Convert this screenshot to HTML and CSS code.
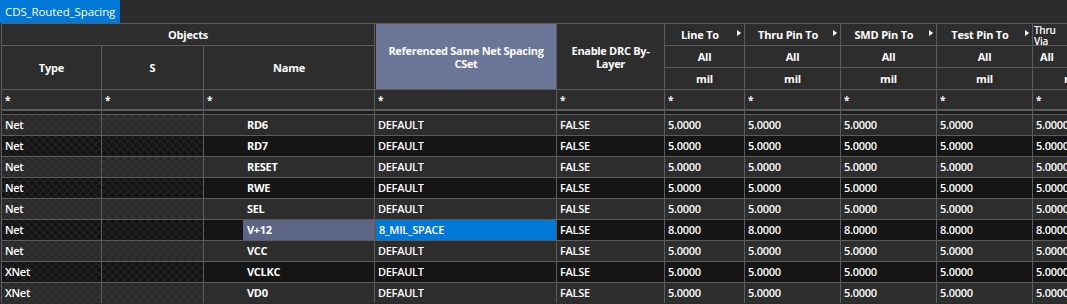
FILE: index.html
```html
<!DOCTYPE html>
<html>
<head>
<meta charset="utf-8">
<link rel="stylesheet" href="styles.css">
</head>
<body>
<div class="tabbar"><div class="tab">CDS_Routed_Spacing</div></div>
<div class="grid">
  <div class="hd c-obj">Objects</div>
  <div class="hd c-ref">Referenced Same Net Spacing CSet</div>
  <div class="hd c-drc">Enable DRC By-Layer</div>
  <div class="hd col"><span>Line To</span><i class="tri"></i></div>
  <div class="hd col"><span>Thru Pin To</span><i class="tri"></i></div>
  <div class="hd col"><span>SMD Pin To</span><i class="tri"></i></div>
  <div class="hd col"><span>Test Pin To</span><i class="tri"></i></div>
  <div class="hd col via"><span class="via-t">Thru<br>Via</span><i class="tri"></i></div>

  <div class="hd c-sub">Type</div>
  <div class="hd c-sub">S</div>
  <div class="hd c-sub">Name</div>
  <div class="hd">All</div>
  <div class="hd">All</div>
  <div class="hd">All</div>
  <div class="hd">All</div>
  <div class="hd via-all">All</div>

  <div class="hd">mil</div>
  <div class="hd">mil</div>
  <div class="hd">mil</div>
  <div class="hd">mil</div>
  <div class="hd via-mil">mil</div>

  <div class="flt">*</div><div class="flt">*</div><div class="flt">*</div><div class="flt">*</div><div class="flt">*</div>
  <div class="flt">*</div><div class="flt">*</div><div class="flt">*</div><div class="flt">*</div><div class="flt">*</div>

  <div class="sep"></div><div class="sep"></div><div class="sep"></div><div class="sep"></div><div class="sep"></div>
  <div class="sep"></div><div class="sep"></div><div class="sep"></div><div class="sep"></div><div class="sep"></div>

  <div class="d l hatch">Net</div><div class="d l hatch"></div><div class="d l name"><span>RD6</span></div><div class="d l">DEFAULT</div><div class="d l">FALSE</div><div class="d l">5.0000</div><div class="d l">5.0000</div><div class="d l">5.0000</div><div class="d l">5.0000</div><div class="d l">5.0000</div>
  <div class="d k hatch">Net</div><div class="d k hatch"></div><div class="d k name"><span>RD7</span></div><div class="d k">DEFAULT</div><div class="d k">FALSE</div><div class="d k">5.0000</div><div class="d k">5.0000</div><div class="d k">5.0000</div><div class="d k">5.0000</div><div class="d k">5.0000</div>
  <div class="d l hatch">Net</div><div class="d l hatch"></div><div class="d l name"><span>RESET</span></div><div class="d l">DEFAULT</div><div class="d l">FALSE</div><div class="d l">5.0000</div><div class="d l">5.0000</div><div class="d l">5.0000</div><div class="d l">5.0000</div><div class="d l">5.0000</div>
  <div class="d k hatch">Net</div><div class="d k hatch"></div><div class="d k name"><span>RWE</span></div><div class="d k">DEFAULT</div><div class="d k">FALSE</div><div class="d k">5.0000</div><div class="d k">5.0000</div><div class="d k">5.0000</div><div class="d k">5.0000</div><div class="d k">5.0000</div>
  <div class="d l hatch">Net</div><div class="d l hatch"></div><div class="d l name"><span>SEL</span></div><div class="d l">DEFAULT</div><div class="d l">FALSE</div><div class="d l">5.0000</div><div class="d l">5.0000</div><div class="d l">5.0000</div><div class="d l">5.0000</div><div class="d l">5.0000</div>
  <div class="d k hatch">Net</div><div class="d k hatch"></div><div class="d k name"><span class="hl">V+12</span></div><div class="d k sel">8_MIL_SPACE</div><div class="d k">FALSE</div><div class="d k">8.0000</div><div class="d k">8.0000</div><div class="d k">8.0000</div><div class="d k">8.0000</div><div class="d k">8.0000</div>
  <div class="d l hatch">Net</div><div class="d l hatch"></div><div class="d l name"><span>VCC</span></div><div class="d l">DEFAULT</div><div class="d l">FALSE</div><div class="d l">5.0000</div><div class="d l">5.0000</div><div class="d l">5.0000</div><div class="d l">5.0000</div><div class="d l">5.0000</div>
  <div class="d k hatch">XNet</div><div class="d k hatch"></div><div class="d k name"><span>VCLKC</span></div><div class="d k">DEFAULT</div><div class="d k">FALSE</div><div class="d k">5.0000</div><div class="d k">5.0000</div><div class="d k">5.0000</div><div class="d k">5.0000</div><div class="d k">5.0000</div>
  <div class="d l hatch">XNet</div><div class="d l hatch"></div><div class="d l name"><span>VD0</span></div><div class="d l">DEFAULT</div><div class="d l">FALSE</div><div class="d l">5.0000</div><div class="d l">5.0000</div><div class="d l">5.0000</div><div class="d l">5.0000</div><div class="d l">5.0000</div>
</div>
</body>
</html>
```

FILE: styles.css
```css
html, body {
  margin: 0;
  padding: 0;
  background: #2c2c2c;
  width: 1067px;
  height: 304px;
  overflow: hidden;
  font-family: "Open Sans", "Noto Sans", sans-serif;
  font-size: 11px;
  color: #ffffff;
}

.tabbar {
  height: 23px;
  display: flex;
}

.tab {
  background: #0078d7;
  width: 115px;
  padding-left: 5px;
  font-size: 11.5px;
  line-height: 23px;
  letter-spacing: -0.1px;
  color: #fff;
}

.grid {
  display: grid;
  grid-template-columns: 99px 101px 170px 181px 107px 79px 95px 95px 95px 80px;
  grid-template-rows: 21px 21px 21px 20px 3px repeat(9, 20px);
  gap: 1px;
  padding: 1px 0 0 1px;
  margin-left: 1px;
  width: max-content;
  background: #5c5c5c;
}

.grid > div {
  overflow: hidden;
  white-space: nowrap;
}

.hd {
  background: #2d2d2d;
  font-weight: 700;
  display: flex;
  align-items: center;
  justify-content: center;
  letter-spacing: -0.2px;
}

.c-obj { grid-column: 1 / span 3; }

.c-ref {
  grid-column: 4;
  grid-row: 1 / span 3;
  background: #6b7597;
  border-left: 1px solid #2d2d2d;
  white-space: normal !important;
  text-align: center;
  line-height: 13px;
  padding: 0 3px;
  letter-spacing: -0.3px;
}

.c-drc {
  grid-column: 5;
  grid-row: 1 / span 3;
  white-space: normal !important;
  text-align: center;
  line-height: 13px;
  padding: 0 6px;
  letter-spacing: -0.3px;
}

.c-sub { grid-row: 2 / span 2; }

.col {
  position: relative;
  padding-right: 9px;
}

.tri {
  position: absolute;
  right: 3px;
  top: 6px;
  width: 0;
  height: 0;
  border-top: 3.5px solid transparent;
  border-bottom: 3.5px solid transparent;
  border-left: 4px solid #ffffff;
}

.via {
  justify-content: flex-start;
  align-items: flex-start;
  padding-left: 1px;
}

.via-t {
  font-size: 10px;
  font-weight: 600;
  line-height: 11px;
  margin-top: 1px;
  letter-spacing: -0.3px;
}

.via-all {
  justify-content: flex-start;
  padding-left: 7px;
}

.via-mil {
  justify-content: flex-start;
  padding-left: 31px;
}

.flt {
  background: #2d2d2d;
  font-weight: 700;
  padding-left: 3px;
  line-height: 20px;
  font-size: 10px;
  box-shadow: inset 0 -1px 0 #5c5c5c;
}

.sep {
  background: #1c1c1c;
}

.d {
  padding-left: 3px;
  line-height: 20px;
  font-weight: 600;
  letter-spacing: -0.3px;
}

.l { background: #2d2d2d; }
.k { background: #151515; }

.hatch.l {
  background-color: #2a2a2a;
  background-image:
    repeating-linear-gradient(45deg, #383838 0 1px, transparent 1px 5.66px),
    repeating-linear-gradient(-45deg, #383838 0 1px, transparent 1px 5.66px);
}

.hatch.k {
  background-color: #141414;
  background-image:
    repeating-linear-gradient(45deg, #2a2a2a 0 1px, transparent 1px 5.66px),
    repeating-linear-gradient(-45deg, #2a2a2a 0 1px, transparent 1px 5.66px);
}

.name {
  padding-left: 39px !important;
  font-weight: 700;
}

.name span {
  display: block;
  padding-left: 4px;
  height: 20px;
}

.name .hl {
  background: #5d6586;
}

.sel {
  background: #0078d7;
  margin-left: 1px;
}
```
